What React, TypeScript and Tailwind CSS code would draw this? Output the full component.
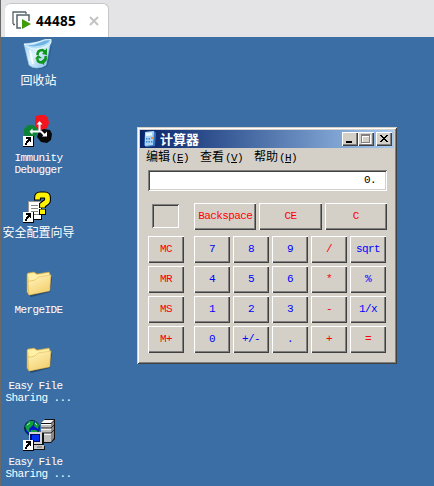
import type { ReactNode } from "react";

const songti = "font-['Liberation_Mono','Noto_Sans_CJK_SC',monospace]";

function ShortcutArrow() {
  return (
    <g shapeRendering="crispEdges">
      <path d="M0 21h11v11H0z" fill="#000" />
      <path d="M0 21h10v10H0z" fill="#fff" />
      <path d="M3 22h5v5H7v-1H6v1H5v1H4v2H2v-2h1v-2h1v-1h1v-1H3z" fill="#000" />
    </g>
  );
}

function RecycleIcon() {
  return (
    <>
      <defs>
        <linearGradient id="bin" x1="0" y1="0" x2="1" y2="1">
          <stop offset="0" stopColor="#8fcaf0" />
          <stop offset=".45" stopColor="#dff3ff" />
          <stop offset="1" stopColor="#7fbbe6" />
        </linearGradient>
      </defs>
      <path d="M4 8L9 28q6 4 12 1l4-2 4-20z" fill="#204f80" opacity=".4" />
      <path d="M1 5L6 26q3 3 8 3 5 0 9-3L28 1z" fill="url(#bin)" stroke="#9bd0ee" strokeWidth=".6" />
      <path d="M1 5Q8 6 15 3 21 0 28 0L28 4Q23 9 13 10 5 10 1 5z" fill="#b5e0f8" stroke="#fff" strokeWidth=".7" />
      <path d="M4 6q6 1 12-2 6-3 11-3-3 5-13 6Q7 8 4 6z" fill="#6db2e2" />
      <path d="M7 11l3 14" stroke="#fff" strokeWidth="2" opacity=".8" />
      <g fill="none" stroke="#12951f" strokeWidth="2.6">
        <path d="M14.5 16q0-5 5-5l3 2" />
        <path d="M22.5 17q1 5-3 6" />
        <path d="M19 23.5q-5 0-4.5-4" />
      </g>
      <path d="M24 9v7l-5-1zM22 19l-5 4 4 3zM12 20l3-4 4 3z" fill="#12951f" />
    </>
  );
}

function ImmunityIcon() {
  return (
    <>
      <path d="M12 4l1-3 4-1 5 0 3 3 1 5-2 5-5 2-5-1-2-4z" fill="#f5141e" />
      <path d="M1 14l4-4 5 0 4 3v6l-3 4H2l-1-5z" fill="#0c8434" />
      <path d="M16 16l5-2 6 1 2 4-1 6-4 3-6-1-4-5z" fill="#080808" />
      <path d="M16.5 16V8M8 16.5h10l4 4" fill="none" stroke="#fff" strokeWidth="2" />
      <path d="M13.5 9.5l3-3.5 3 3.5zM9.5 13.5l-3 3 3 3zM19 21.5h5v-5z" fill="#fff" />
      <ShortcutArrow />
    </>
  );
}

function SecurityIcon() {
  return (
    <>
      <g shapeRendering="crispEdges">
        <path d="M6 11h13v18H6z" fill="#000" />
        <path d="M5 10h13v18H5z" fill="#fff" />
        <path d="M5 10.5h13M5.5 10v12" stroke="#999" />
        <path d="M8 14.5h7M8 17.5h7M8 20.5h7M11 23.5h5" stroke="#888" />
      </g>
      <path d="M14.5 9.5V7q0-3 3-3h4q3 0 3 3v2q0 2-3 3.5l-2 1.5v3" fill="none" stroke="#000" strokeWidth="7" />
      <path d="M14.5 8.5V7q0-3 3-3h4q3 0 3 3v2q0 2-3 3.5l-2 1.5v2.500" fill="none" stroke="#fff200" strokeWidth="4.8" />
      <path d="M16 18h7v6h-7z" fill="#000" />
      <path d="M17 18.5h5V23h-5z" fill="#fff200" />
      <ShortcutArrow />
    </>
  );
}

function FolderIcon() {
  return (
    <>
      <defs>
        <linearGradient id="folder" x1="0" y1="0" x2=".6" y2="1">
          <stop offset="0" stopColor="#fff6bf" />
          <stop offset="1" stopColor="#f4d070" />
        </linearGradient>
      </defs>
      <path d="M6 28l2 2 19-5 2-15-2-1z" fill="#182d42" opacity=".55" />
      <path d="M4 7l1-1 6-1 3 2 12-2 1 2v16L6 28l-2-3z" fill="#f0d070" stroke="#c9a340" strokeWidth=".5" />
      <path d="M5 7l6-1 3 2 12-2 0 4L6 14z" fill="#fff0a8" />
      <path d="M5 14.5l7-1.5 3-3 13-2-1.500 16L6 28z" fill="url(#folder)" stroke="#ddb24c" strokeWidth=".5" />
    </>
  );
}

function ServerIcon() {
  return (
    <>
      <path d="M18 4l4-4h10v20l-4 4H18z" fill="#111" />
      <path d="M18 5h10v18H18z" fill="#bdbdbd" />
      <path d="M18 4l3-3h10l-3 3z" fill="#f5f5f5" />
      <path d="M28 5l3-3v17l-3 4z" fill="#888" />
      <path d="M18 9h10l3-3M18 14h10l3-3" fill="none" stroke="#222" />
      <path d="M18 10.3h10M18 15.3h10M18 5.5h10" stroke="#fff" />
      <circle cx="9" cy="9" r="7.5" fill="#0018c8" stroke="#062b42" />
      <path d="M2 7l4-5 5 0-1 4-4 4 1 4-3-2zM12 2l4 4-1 4-4-3zM8 11l5 0 2 2-4 3-4-2z" fill="#12a03c" />
      <path d="M4 6l3-2M12 4l2 2" stroke="#a6edbd" />
      <path d="M6 14h15v12H6z" fill="#111" />
      <path d="M6 13h13v12H6z" fill="#d5d5d5" />
      <path d="M7 15h10v8H7z" fill="#000b60" />
      <path d="M9 16h7v6H9z" fill="#0030f0" />
      <path d="M10 27h12v4H10z" fill="#111" />
      <path d="M10 26h11v4H10z" fill="#c8c8c8" />
      <path d="M14 28h5" stroke="#666" />
      <ShortcutArrow />
    </>
  );
}

function DesktopIcon({ lines, children }: { lines: string[]; children: ReactNode }) {
  return (
    <div className="flex h-[76px] flex-col items-center">
      <svg className="h-8 w-8 shrink-0" viewBox="0 0 32 32">{children}</svg>
      <div className={`mt-[5px] text-center text-white ${songti}`}>
        {lines.map((line) =>
          /[a-z]/.test(line) ? (
            <div key={line} className="h-3 text-[11px] leading-3 tracking-[-0.6px] whitespace-pre">{line}</div>
          ) : (
            <div key={line} className="h-3 text-xs leading-3 whitespace-nowrap">{line}</div>
          ),
        )}
      </div>
    </div>
  );
}

const raised =
  "bg-[#d4d0c8] shadow-[inset_1px_1px_#fff,inset_-1px_-1px_#404040,inset_-2px_-2px_#808080]";

function Key({ label, red, top }: { label: string; red?: boolean; top?: boolean }) {
  return (
    <button
      className={`flex h-[27px] items-center justify-center text-[11px] leading-none tracking-[-0.6px] ${raised} ${songti} ${
        top ? "flex-1" : "w-9"
      } ${red ? "text-[#ff0000]" : "text-[#0000ff]"}`}
    >
      {label}
    </button>
  );
}

function MenuItem({ text, hotkey }: { text: string; hotkey: string }) {
  return (
    <span className="flex w-[54px] items-center">
      <span className="w-[25px]">{text}</span>
      <span className="text-[11px] tracking-[-0.6px]">
        (<span className="underline underline-offset-1">{hotkey}</span>)
      </span>
    </span>
  );
}

const rows = [
  ["MC", "7", "8", "9", "/", "sqrt"],
  ["MR", "4", "5", "6", "*", "%"],
  ["MS", "1", "2", "3", "-", "1/x"],
  ["M+", "0", "+/-", ".", "+", "="],
];
const isRed = (k: string) => k.startsWith("M") || ["/", "*", "-", "+", "="].includes(k);

function Calculator() {
  return (
    <div className="h-[237px] w-[260px] bg-[#d4d0c8] p-[3px] shadow-[inset_1px_1px_#d4d0c8,inset_-1px_-1px_#404040,inset_2px_2px_#fff,inset_-2px_-2px_#808080]">
      <div className="flex h-[18px] items-center bg-linear-to-r from-[#0a246a] to-[#a6caf0] pr-0.5 pl-1">
        <svg className="h-4 w-3" viewBox="0 0 12 16">
          <path d="M1 1l9-1 2 2-1 13-9 1-2-2z" fill="#3975bd" />
          <path d="M1 1l9-1-1 14-8 1z" fill="#a9d4f7" />
          <path d="M2 2l6-.5v3L2 5z" fill="#e8faff" />
          <path d="M2 7h1.5v1.5H2zM4.500 7H6v1.5H4.500zM2 10h1.5v1.5H2zM4.500 10H6v1.5H4.500zM7 10h1.5v1.5H7z" fill="#4284cc" />
          <path d="M7 6h2v2H7z" fill="#ee9444" />
        </svg>
        <span className="ml-1 font-['Noto_Sans_CJK_SC',sans-serif] text-[13px] leading-[18px] font-bold text-white">计算器</span>
        <div className="ml-auto flex">
          <div className={`h-3.5 w-4 ${raised}`}>
            <svg className="h-3.5 w-4" shapeRendering="crispEdges"><path d="M4 9h6v2H4z" /></svg>
          </div>
          <div className={`h-3.5 w-4 ${raised}`}>
            <svg className="h-3.5 w-4" shapeRendering="crispEdges">
              <path d="M4 3h9v9H4z" fill="#fff" />
              <path d="M3 2h9v9H3z" fill="#808080" />
              <path d="M4 4h7v6H4z" fill="#d4d0c8" />
              <path d="M4 4h7v1H5v5H4z" fill="#fff" />
            </svg>
          </div>
          <div className={`ml-0.5 h-3.5 w-4 ${raised}`}>
            <svg className="h-3.5 w-4" shapeRendering="crispEdges">
              <path d="M4 3h2v1h1v1h2V4h1V3h2v1h-1v1h-1v1H9v1h1v1h1v1h1v1h-2V9H9V8H7v1H6v1H4V9h1V8h1V7h1V6H6V5H5V4H4z" />
            </svg>
          </div>
        </div>
      </div>
      <div className={`flex h-5 pt-px pl-1.5 text-xs leading-[19px] text-black ${songti}`}>
        <MenuItem text="编辑" hotkey="E" />
        <MenuItem text="查看" hotkey="V" />
        <MenuItem text="帮助" hotkey="H" />
      </div>
      <div className="px-2 pt-0.5">
        <div className={`h-[21px] w-[239px] bg-white pr-[11px] text-right text-[11px] leading-5 tracking-[-0.6px] text-black shadow-[inset_1px_1px_#808080,inset_-1px_-1px_#fff,inset_2px_2px_#404040,inset_-2px_-2px_#d4d0c8] ${songti}`}>
          0.
        </div>
        <div className="mt-3 flex h-[27px] w-[239px] items-start">
          <div className="mt-px mr-[15px] ml-1 h-6 w-[27px] shadow-[inset_1px_1px_#808080,inset_-1px_-1px_#fff,inset_2px_2px_#404040]" />
          <div className="flex flex-1 gap-[3px]">
            <Key label="Backspace" red top />
            <Key label="CE" red top />
            <Key label="C" red top />
          </div>
        </div>
        <div className="mt-1.5 flex flex-col gap-[3px]">
          {rows.map(([memory, ...keys]) => (
            <div key={memory} className="flex">
              <Key label={memory} red />
              <div className="ml-2.5 flex gap-[3px]">
                {keys.map((k) => <Key key={k} label={k} red={isRed(k)} />)}
              </div>
            </div>
          ))}
        </div>
      </div>
    </div>
  );
}

export default function App() {
  return (
    <div className="flex h-[486px] w-[434px] flex-col overflow-hidden border-l border-[#696969] bg-[#e4e4e6]">
      <div className="flex h-[37px] shrink-0 items-end pl-1">
        <div className="flex h-[34px] w-[104px] items-center rounded-t-md border-t border-r border-[#c6c6c8] bg-white pl-[7px]">
          <svg className="h-[19px] w-[19px]" viewBox="0 0 19 19" fill="none">
            <path d="M1 13V1h13M3 13.5H1M14 1v2" stroke="#53636b" strokeWidth="1.3" />
            <path d="M9 17H5V4h12v6" stroke="#53636b" strokeWidth="1.5" />
            <path d="M10 8l9 5-9 5z" fill="#3f9c0c" />
          </svg>
          <span className="ml-[5px] font-['Noto_Sans',sans-serif] text-[13.5px] leading-4 font-bold tracking-[0.3px] text-black">44485</span>
          <svg className="ml-[13px] h-[10px] w-[10px]" viewBox="0 0 10 10">
            <path d="M1 1l8 8M9 1L1 9" stroke="#c3c3c3" strokeWidth="2" />
          </svg>
        </div>
      </div>
      <div className="flex min-h-0 flex-1 items-start bg-[#3a6ea5]">
        <div className="w-[75px] pt-0.5">
          <DesktopIcon lines={["回收站"]}><RecycleIcon /></DesktopIcon>
          <DesktopIcon lines={["Immunity", "Debugger"]}><ImmunityIcon /></DesktopIcon>
          <DesktopIcon lines={["安全配置向导"]}><SecurityIcon /></DesktopIcon>
          <DesktopIcon lines={["MergeIDE"]}><FolderIcon /></DesktopIcon>
          <DesktopIcon lines={["Easy File ", "Sharing ..."]}><FolderIcon /></DesktopIcon>
          <DesktopIcon lines={["Easy File ", "Sharing ..."]}><ServerIcon /></DesktopIcon>
        </div>
        <div className="mt-[90px] ml-[61px]">
          <Calculator />
        </div>
      </div>
    </div>
  );
}
